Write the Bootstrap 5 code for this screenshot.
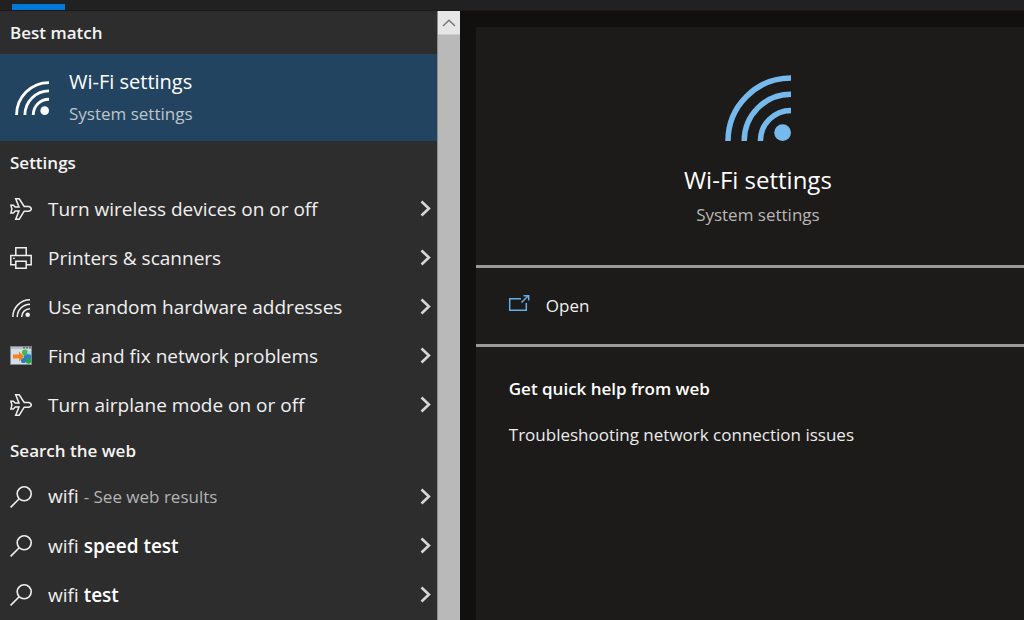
<!DOCTYPE html>
<html lang="en">
<head>
<meta charset="utf-8">
<meta name="viewport" content="width=device-width, initial-scale=1">
<title>Search</title>
<link href="https://cdn.jsdelivr.net/npm/bootstrap@5.3.0/dist/css/bootstrap.min.css" rel="stylesheet">
<style>
  body { font-family: "Open Sans", "Noto Sans", sans-serif; background: #11100e; color: #f4f4f4; }
  .tab-strip { height: 11px; padding: 4px 12px 0; background: #212121; border-bottom: 1px solid #1a1818; }
  .tab-mark { width: 53px; height: 6px; background: #0078d7; }
  .results { flex: 0 0 44.9%; background: #2d2d2d; }
  .group-title { font-size: 17px; line-height: 43px; font-weight: 600; margin: 0; padding-left: 10px; }
  .best { height: 87px; background: #224461; color: #fff; padding: 0 0 0 15px; }
  .best-name { font-size: 20px; line-height: 32px; }
  .sub { font-size: 17px; line-height: 32px; color: #bfc5ca; }
  .hit { height: 49px; padding: 0 6px 0 10px; background: transparent; color: #f0f0f0; font-size: 19px; line-height: 28px; }
  .hit b { font-weight: 600; color: #fff; }
  .hint { font-size: 17px; color: #b4b4b4; }
  .hit-icon { width: 22px; height: 22px; margin-right: 16px; }
  .scroll-track { flex: 0 0 23px; background: #b9b9b9; border-left: 1px solid #8a8a8a; }
  .scroll-up { height: 24px; background: #e6e6e6; border-bottom: 1px solid #cfcfcf; }
  .detail { background: #1c1b19; margin: 16px 0 0 16px; }
  .hero { height: 238px; padding: 48px 0 0 16px; }
  .hero-name { font-size: 24px; line-height: 32px; font-weight: 400; color: #fff; margin: 23px 0 0; }
  .hero .sub { color: #b8b7b6; line-height: 38px; }
  .open-row { height: 82px; padding: 0 0 0 32px; border-top: 3px solid #9c9a99; border-bottom: 3px solid #9c9a99; background: transparent; color: #f0f0f0; font-size: 17px; }
  .help { padding: 26px 0 0 33px; font-size: 17px; line-height: 32px; }
  .help h2 { font-size: 17px; line-height: 32px; font-weight: 600; margin: 0 0 14px; color: #fff; }
  .help a { color: #ececec; }
</style>
</head>
<body class="vh-100 d-flex flex-column overflow-hidden">
<svg class="d-none" aria-hidden="true">
  <symbol id="wifi" viewBox="0 0 66 66">
    <g fill="none" stroke="currentColor" stroke-width="5.5"><path d="M3 66A63 63 0 0 1 66 3M19.2 66A46.8 46.8 0 0 1 66 19.2M35.4 66A30.6 30.6 0 0 1 66 35.4"/></g>
    <circle cx="57.6" cy="57.6" r="8.4" fill="currentColor"/>
  </symbol>
  <symbol id="plane" viewBox="0 0 22 22">
    <path d="M.9 7.300H3.400L5.200 9H9L5.700 .8H9.200L14.200 8.500H18.800Q21.300 9 21.300 11Q21.300 12.600 18.800 13.200H14.200L9.200 21.200H5.700L9 13H5.200L3.400 14.900H.9L1.900 11Z" fill="none" stroke="currentColor" stroke-width="1.500"/>
  </symbol>
  <symbol id="printer" viewBox="0 0 22 22">
    <path d="M5.8 8.5V.8H16.2V8.5M5.8 17.8H.8V8.5H21.2V17.8H16.2M5.8 14.3H16.2V21.2H5.8Z" fill="none" stroke="currentColor" stroke-width="1.5"/><path d="M3 10.7h1.8v1.4H3z" fill="currentColor"/>
  </symbol>
  <symbol id="lens" viewBox="0 0 22 22">
    <g fill="none" stroke="currentColor" stroke-width="1.6"><circle cx="14.2" cy="7.8" r="7"/><path d="M9.2 12.8L.6 21.4"/></g>
  </symbol>
  <symbol id="trouble" viewBox="0 0 22 22">
    <path d="M0 1h22v19H0z" fill="#85898d"/><path d="M1 3.500h20v15.500H1z" fill="#d5dee6"/><path d="M1 2h20v2H1z" fill="#b9bfc6"/><path d="M13 2h2v1.500h-2zm3 0h2v1.500h-2zm3 0h2v1.500h-2z" fill="#6b737a"/>
    <circle cx="17.500" cy="12" r="3.800" fill="#2d7dcc"/><circle cx="15" cy="7.500" r="3" fill="#46b552"/><circle cx="13.500" cy="15.500" r="2.600" fill="#2f78c2"/><circle cx="18.500" cy="16" r="2.800" fill="#25a646"/><circle cx="19" cy="7.500" r="2" fill="#9fd7ee"/>
    <path d="M3 9.500h6V6.500l5 5L9 16.500v-3H3z" fill="#f5811f"/>
  </symbol>
  <symbol id="chev" viewBox="0 0 11 17">
    <path d="M1.500 1.500L8.900 8.500L1.500 15.500" fill="none" stroke="#d6d6d6" stroke-width="2.600"/>
  </symbol>
</svg>

<header class="tab-strip flex-shrink-0"><div class="tab-mark"></div></header>
<main class="d-flex flex-grow-1 overflow-hidden">
  <section class="results d-flex overflow-hidden">
    <div class="flex-grow-1 overflow-hidden">
      <h2 class="group-title">Best match</h2>
      <button type="button" class="best border-0 w-100 d-flex align-items-center text-start">
        <svg width="34" height="34" class="flex-shrink-0"><use href="#wifi"/></svg>
        <span class="d-flex flex-column ps-3 ms-1"><span class="best-name">Wi-Fi settings</span><span class="sub">System settings</span></span>
      </button>
      <h2 class="group-title">Settings</h2>
      <button type="button" class="hit border-0 w-100 d-flex align-items-center text-start"><svg class="hit-icon"><use href="#plane"/></svg><span class="flex-grow-1">Turn wireless devices on or off</span><svg width="11" height="17"><use href="#chev"/></svg></button>
      <button type="button" class="hit border-0 w-100 d-flex align-items-center text-start"><svg class="hit-icon"><use href="#printer"/></svg><span class="flex-grow-1">Printers &amp; scanners</span><svg width="11" height="17"><use href="#chev"/></svg></button>
      <button type="button" class="hit border-0 w-100 d-flex align-items-center text-start"><svg class="hit-icon"><use href="#wifi" x="2" y="3" width="18" height="18"/></svg><span class="flex-grow-1">Use random hardware addresses</span><svg width="11" height="17"><use href="#chev"/></svg></button>
      <button type="button" class="hit border-0 w-100 d-flex align-items-center text-start"><svg class="hit-icon"><use href="#trouble"/></svg><span class="flex-grow-1">Find and fix network problems</span><svg width="11" height="17"><use href="#chev"/></svg></button>
      <button type="button" class="hit border-0 w-100 d-flex align-items-center text-start"><svg class="hit-icon"><use href="#plane"/></svg><span class="flex-grow-1">Turn airplane mode on or off</span><svg width="11" height="17"><use href="#chev"/></svg></button>
      <h2 class="group-title">Search the web</h2>
      <button type="button" class="hit border-0 w-100 d-flex align-items-center text-start"><svg class="hit-icon"><use href="#lens"/></svg><span class="flex-grow-1">wifi <span class="hint">- See web results</span></span><svg width="11" height="17"><use href="#chev"/></svg></button>
      <button type="button" class="hit border-0 w-100 d-flex align-items-center text-start"><svg class="hit-icon"><use href="#lens"/></svg><span class="flex-grow-1">wifi <b>speed test</b></span><svg width="11" height="17"><use href="#chev"/></svg></button>
      <button type="button" class="hit border-0 w-100 d-flex align-items-center text-start"><svg class="hit-icon"><use href="#lens"/></svg><span class="flex-grow-1">wifi <b>test</b></span><svg width="11" height="17"><use href="#chev"/></svg></button>
    </div>
    <div class="scroll-track">
      <button type="button" class="scroll-up border-start-0 border-end-0 border-top-0 w-100 p-0 d-flex align-items-center justify-content-center" aria-label="Scroll up"><svg width="14" height="8" viewBox="0 0 14 8"><path d="M1 7L7 1.300L13 7" fill="none" stroke="#777" stroke-width="1.500"/></svg></button>
    </div>
  </section>
  <section class="detail flex-grow-1">
    <div class="hero text-center">
      <svg width="66" height="66" class="d-block mx-auto" style="color:#76b9ed"><use href="#wifi"/></svg>
      <h1 class="hero-name">Wi-Fi settings</h1>
      <div class="sub">System settings</div>
    </div>
    <button type="button" class="open-row border-start-0 border-end-0 w-100 d-flex align-items-center text-start">
      <svg width="22" height="22" viewBox="0 0 22 22" class="me-3 mb-1"><path d="M13 5.700H1.700V17.300H18.300V10M13.500 9.500L20.300 2.700M15.500 2.700H20.700V7.500" fill="none" stroke="#63aee6" stroke-width="1.500"/></svg>
      <span>Open</span>
    </button>
    <div class="help">
      <h2>Get quick help from web</h2>
      <a href="#" class="text-decoration-none">Troubleshooting network connection issues</a>
    </div>
  </section>
</main>
<script src="https://cdn.jsdelivr.net/npm/bootstrap@5.3.0/dist/js/bootstrap.bundle.min.js"></script>
</body>
</html>
